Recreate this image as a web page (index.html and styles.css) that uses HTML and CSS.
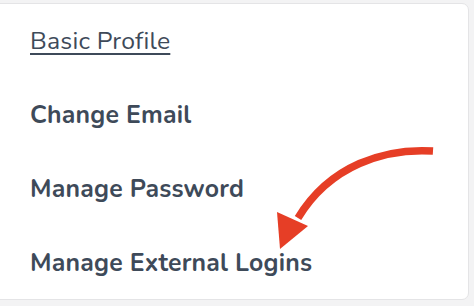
FILE: index.html
```html
<!DOCTYPE html>
<html>
<head>
<meta charset="utf-8">
<link rel="stylesheet" href="styles.css">
</head>
<body>
<div class="card">
  <ul class="menu">
    <li><a class="link active" href="#">Basic Profile</a></li>
    <li><a class="link" href="#">Change Email</a></li>
    <li><a class="link" href="#">Manage Password</a></li>
    <li><a class="link" href="#">Manage External Logins</a></li>
  </ul>
  <svg class="arrow" width="474" height="306" viewBox="0 0 474 306">
    <path d="M433,151 C385,148 330,165 298,218" fill="none" stroke="#e63e26" stroke-width="7.5"/>
    <polygon points="277,212 308,226 280,249" fill="#e63e26"/>
  </svg>
</div>
</body>
</html>
```
FILE: styles.css
```css
html, body {
  margin: 0;
  padding: 0;
  background: #f3f3f4;
  width: 474px;
  height: 306px;
  overflow: hidden;
}
.card {
  box-sizing: border-box;
  margin: 3px 0 0 -10px;
  width: 479px;
  height: 297px;
  background: #ffffff;
  border: 1px solid #e4e4e6;
  border-radius: 7px;
}
.menu {
  list-style: none;
  margin: 0;
  padding: 23px 0 0 39px;
  display: flex;
  flex-direction: column;
  gap: 45px;
}
.link {
  display: inline-block;
  font-family: "Nunito", "Lato", "Noto Sans", sans-serif;
  font-size: 24.8px;
  line-height: 29px;
  font-weight: 700;
  color: #3e4a59;
  text-decoration: none;
  letter-spacing: 0.2px;
}
.link.active {
  font-weight: 400;
  text-decoration: underline;
  text-decoration-thickness: 2px;
  text-underline-offset: 4px;
}
.arrow {
  position: absolute;
  left: 0;
  top: 0;
  pointer-events: none;
}
```
